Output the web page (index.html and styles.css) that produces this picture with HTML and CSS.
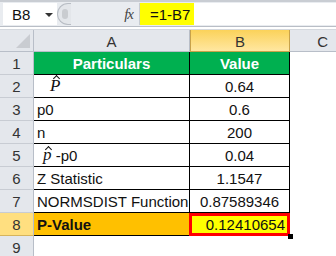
FILE: index.html
```html
<!DOCTYPE html>
<html>
<head>
<meta charset="utf-8">
<link rel="stylesheet" href="styles.css">
</head>
<body>
<div class="app">
  <div class="fbar">
    <div class="namebox"><span class="nb-text">B8</span><span class="nb-arrow"></span></div>
    <div class="knob"><span class="knob-dot"></span></div>
    <div class="fx-area"><span class="fx">fx</span></div>
    <div class="formula"><span class="formula-text">=1-B7</span></div>
  </div>
  <div class="sep"></div>
  <div class="sheet">
    <div class="corner"><span class="tri"></span></div>
    <div class="colh">A</div>
    <div class="colh colh-sel">B</div>
    <div class="colh colh-last">C</div>

    <div class="rowh">1</div>
    <div class="cell head">Particulars</div>
    <div class="cell head num">Value</div>
    <div class="blank"></div>

    <div class="rowh">2</div>
    <div class="cell"><span class="hat hat-big">P</span></div>
    <div class="cell num">0.64</div>
    <div class="blank"></div>

    <div class="rowh">3</div>
    <div class="cell">p0</div>
    <div class="cell num">0.6</div>
    <div class="blank"></div>

    <div class="rowh">4</div>
    <div class="cell">n</div>
    <div class="cell num">200</div>
    <div class="blank"></div>

    <div class="rowh">5</div>
    <div class="cell"><span class="hat hat-small">p</span>&nbsp;-p0</div>
    <div class="cell num">0.04</div>
    <div class="blank"></div>

    <div class="rowh">6</div>
    <div class="cell">Z Statistic</div>
    <div class="cell num">1.1547</div>
    <div class="blank"></div>

    <div class="rowh">7</div>
    <div class="cell">NORMSDIST Function</div>
    <div class="cell num">0.87589346</div>
    <div class="blank"></div>

    <div class="rowh rowh-sel">8</div>
    <div class="cell pval">P-Value</div>
    <div class="cell num active">0.12410654<span class="handle"></span></div>
    <div class="blank"></div>

    <div class="rowh rowh-last">9</div>
    <div class="blank9"></div>
    <div class="blank9"></div>
    <div class="blank9"></div>
  </div>
</div>
</body>
</html>
```

FILE: styles.css
```css
* { box-sizing: border-box; }
html, body { margin: 0; padding: 0; background: #fff; }
body { width: 336px; height: 256px; overflow: hidden; font-family: "Liberation Sans", Arial, sans-serif; }

.app { width: 336px; }

.fbar {
  height: 27px;
  display: flex;
  align-items: stretch;
  background: #e9ecf0;
  border-top: 2px solid #c9cdd3;
  border-bottom: 1px solid #b9bec6;
  padding-top: 1px;
  padding-bottom: 1px;
}
.namebox {
  width: 54px;
  margin-left: 3px;
  background: #fff;
  display: flex;
  align-items: center;
  position: relative;
}
.nb-text { font-size: 15px; color: #111; margin-left: 9px; }
.nb-arrow {
  position: absolute;
  left: 42px; top: 10px;
  width: 0; height: 0;
  border-left: 4px solid transparent;
  border-right: 4px solid transparent;
  border-top: 4px solid #333;
}
.knob {
  width: 14px;
  background: #e3e6ea;
  border: 1px solid #b8bdc4;
  border-right: none;
  border-radius: 11px 0 0 11px;
  display: flex; align-items: center; justify-content: center;
}
.knob-dot { width: 6px; height: 10px; border-radius: 3px; background: #c9ccd0; }
.fx-area {
  width: 69px;
  display: flex; align-items: center; justify-content: flex-end;
  padding-right: 6px;
  border-right: 1px solid #c6cbd1;
}
.fx { font-family: "Liberation Serif", serif; font-style: italic; font-size: 15px; color: #444; letter-spacing: -1px; }
.formula { flex: 1; background: #fff; display: flex; align-items: stretch; }
.formula-text {
  background: #ffff00;
  width: 54px;
  font-size: 15px;
  color: #111;
  display: flex; align-items: center;
  padding-left: 10px;
}
.sep { height: 3px; background: #fff; border-bottom: 1px solid #d4d8de; }

.sheet {
  display: grid;
  grid-template-columns: 34px 156px 100px 46px;
  grid-template-rows: 22px repeat(8, 23px) 22px;
  font-size: 15px;
  color: #111;
}
.corner {
  background: #e4e7ec;
  border-right: 1px solid #b8bec8;
  border-bottom: 1px solid #b8bec8;
  position: relative;
}
.tri {
  position: absolute; right: 3px; bottom: 3px;
  width: 0; height: 0;
  border-left: 14px solid transparent;
  border-bottom: 14px solid #c9ccd1;
}
.colh {
  background: #e4e7ec;
  border-right: 1px solid #b8bec8;
  border-bottom: 1px solid #b8bec8;
  display: flex; align-items: center; justify-content: center;
  font-size: 15px; color: #333;
  padding-top: 1px;
}
.colh-sel {
  background: linear-gradient(#fbd25a, #ffe7a1);
  border-right: 1px solid #c8a24a;
  border-left: 1px solid #c8a24a;
  border-bottom: 1px solid #c8a24a;
}
.colh-last { border-right: none; justify-content: flex-end; padding-right: 8px; }
.rowh {
  background: #e4e7ec;
  border-right: 1px solid #b8bec8;
  border-bottom: 1px solid #c8ccd3;
  display: flex; align-items: center; justify-content: center;
  font-size: 15px; color: #333;
}
.rowh-sel { background: #ffdf80; border-bottom-color: #d6b45c; }
.rowh-last { border-bottom: none; }
.cell {
  border-right: 1px solid #000;
  border-bottom: 1px solid #000;
  display: flex; align-items: center;
  padding-left: 3px;
  white-space: nowrap;
  overflow: visible;
}
.num { justify-content: center; padding-left: 0; }
.head { background: #00b050; color: #fff; font-weight: bold; justify-content: center; padding-left: 0; }
.pval { background: #ffc000; font-weight: bold; }
.active {
  background: #ffff00;
  border: 3px solid #ff0000;
  margin-left: -1px;
  justify-content: flex-end;
  padding-right: 2px;
  position: relative;
}
.handle {
  position: absolute; right: -6px; bottom: -6px;
  width: 5px; height: 5px; background: #000;
}
.hat { font-family: "Liberation Serif", serif; font-style: italic; position: relative; display: inline-block; }
.hat-big { font-size: 17px; margin-left: 13px; }
.hat-small { font-size: 17px; margin-left: 6px; }
.hat::before {
  content: "";
  position: absolute;
  left: 4px; top: 0px;
  width: 4px; height: 4px;
  border-left: 1px solid #111;
  border-top: 1px solid #111;
  transform: rotate(45deg);
}
.hat-small::before { left: 3px; top: 2px; }
```
